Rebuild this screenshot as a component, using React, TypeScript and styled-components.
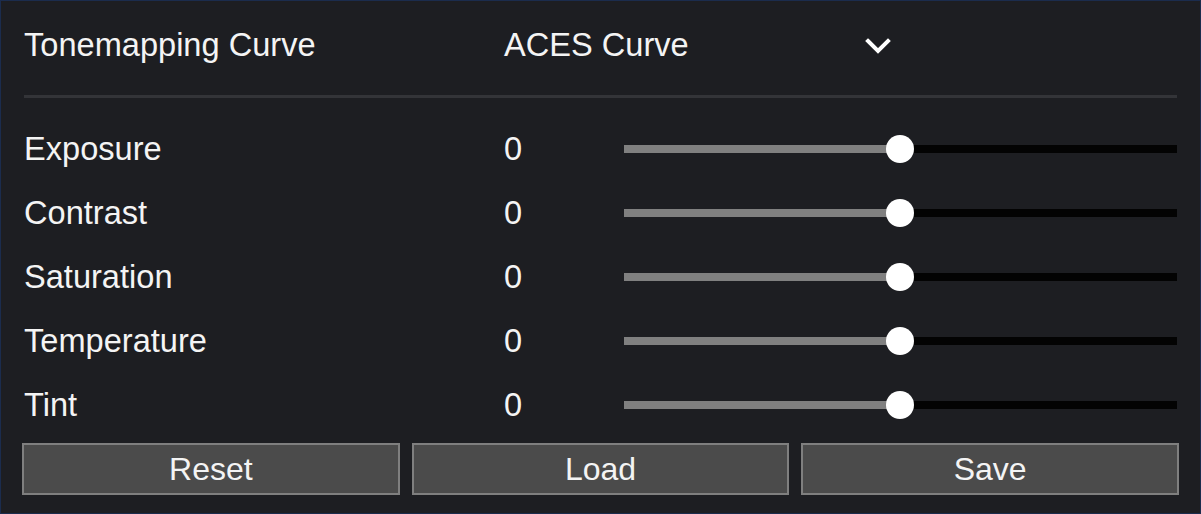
import React from 'react'
import styled, { createGlobalStyle } from 'styled-components'

const GlobalStyle = createGlobalStyle`
  html, body {
    margin: 0;
    padding: 0;
    background: #1d1e22;
  }
  * {
    box-sizing: border-box;
  }
`

const Panel = styled.div`
  width: 1201px;
  height: 514px;
  background: #1d1e22;
  border: 1px solid #1b2c4d;
  padding: 12px 0 0;
  font-family: 'Liberation Sans', Arial, sans-serif;
  font-size: 32.6px;
  color: #f4f4f4;
  display: flex;
  flex-direction: column;
`

const Content = styled.div`
  padding: 0 23px;
`

const Row = styled.div`
  display: grid;
  grid-template-columns: 480px 120px 1fr;
  align-items: center;
  height: 64px;
`

const Label = styled.div`
  line-height: 1;
`

const Value = styled.div`
  line-height: 1;
`

const Select = styled.div`
  grid-column: 2 / 4;
  width: 388px;
  display: flex;
  align-items: center;
  justify-content: space-between;
  cursor: pointer;
`

const Chevron = styled.svg`
  width: 28px;
  height: 18px;
  margin-top: 2px;
`

const Divider = styled.div`
  height: 3px;
  background: #333438;
  margin: 18px 0 19px;
`

const Track = styled.div`
  position: relative;
  height: 8px;
  background: #030303;
`

const Fill = styled.div`
  height: 100%;
  background: #808080;
`

const Thumb = styled.div`
  position: absolute;
  top: 50%;
  width: 28px;
  height: 28px;
  margin: -14px 0 0 -15px;
  border-radius: 50%;
  background: #ffffff;
`

const Buttons = styled.div`
  display: grid;
  grid-template-columns: repeat(3, 1fr);
  gap: 12px;
  padding: 0 21px;
  margin-top: 6px;
`

const Button = styled.button`
  height: 52px;
  background: #4b4b4b;
  border: 2px solid #7f7f7f;
  color: #f4f4f4;
  font-family: 'Liberation Sans', Arial, sans-serif;
  font-size: 32px;
  padding: 0;
  cursor: pointer;
`

type SliderProps = { value: number; min: number; max: number }

const Slider: React.FC<SliderProps> = ({ value, min, max }) => {
  const pct = ((value - min) / (max - min)) * 100
  return (
    <Track>
      <Fill style={{ width: `${pct}%` }} />
      <Thumb style={{ left: `${pct}%` }} />
    </Track>
  )
}

const params = [
  { name: 'Exposure', value: 0 },
  { name: 'Contrast', value: 0 },
  { name: 'Saturation', value: 0 },
  { name: 'Temperature', value: 0 },
  { name: 'Tint', value: 0 },
]

const App: React.FC = () => {
  return (
    <>
      <GlobalStyle />
      <Panel>
        <Content>
          <Row>
            <Label>Tonemapping Curve</Label>
            <Select>
              <span>ACES Curve</span>
              <Chevron viewBox="0 0 28 18" fill="none" stroke="#ffffff" strokeWidth="4" strokeLinecap="square">
                <path d="M4 4 L14 14 L24 4" />
              </Chevron>
            </Select>
          </Row>
          <Divider />
          {params.map(p => (
            <Row key={p.name}>
              <Label>{p.name}</Label>
              <Value>{p.value}</Value>
              <Slider value={p.value} min={-1} max={1} />
            </Row>
          ))}
        </Content>
        <Buttons>
          <Button>Reset</Button>
          <Button>Load</Button>
          <Button>Save</Button>
        </Buttons>
      </Panel>
    </>
  )
}

export default App
